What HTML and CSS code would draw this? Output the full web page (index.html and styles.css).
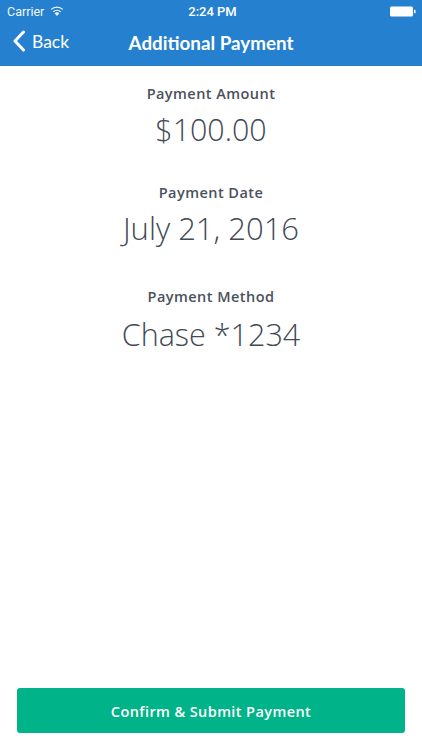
FILE: index.html
```html
<!DOCTYPE html>
<html lang="en">
<head>
<meta charset="utf-8">
<title>Additional Payment</title>
<link rel="stylesheet" href="styles.css">
</head>
<body>
<div class="screen">
  <header class="header">
    <div class="status">
      <div class="status-left">
        <span>Carrier</span>
        <svg class="wifi" width="14" height="10" viewBox="0 0 14 10"><path d="M7 10 L4.6 7.2 A3.6 3.6 0 0 1 9.4 7.2 Z" fill="#fff"/><path d="M3.4 5.8 A5.4 5.4 0 0 1 10.6 5.8" fill="none" stroke="#fff" stroke-width="1.3"/><path d="M1.2 3.4 A8.4 8.4 0 0 1 12.8 3.4" fill="none" stroke="#fff" stroke-width="1.3"/></svg>
      </div>
      <span class="time">2:24 PM</span>
      <div class="status-right">
        <svg width="26" height="11" viewBox="0 0 26 11"><rect x="0" y="0.5" width="23" height="10" rx="1.5" fill="#fff"/><rect x="24" y="3.8" width="1.5" height="3.4" fill="#fff"/></svg>
      </div>
    </div>
    <div class="nav">
      <div class="back">
        <svg width="14" height="22" viewBox="0 0 14 22"><path d="M11.5 2 L3 11 L11.5 20" fill="none" stroke="#fff" stroke-width="3" stroke-linecap="round" stroke-linejoin="round"/></svg>
        <span>Back</span>
      </div>
      <h1 class="title">Additional Payment</h1>
    </div>
  </header>
  <main class="details">
    <section class="item item-amount">
      <h2 class="label">Payment Amount</h2>
      <p class="value value-amount">$100.00</p>
    </section>
    <section class="item item-date">
      <h2 class="label">Payment Date</h2>
      <p class="value value-date">July 21, 2016</p>
    </section>
    <section class="item item-method">
      <h2 class="label">Payment Method</h2>
      <p class="value value-method">Chase *1234</p>
    </section>
  </main>
  <div class="footer">
    <button class="submit" type="button">Confirm &amp; Submit Payment</button>
  </div>
</div>
</body>
</html>
```
FILE: styles.css
```css
* { box-sizing: border-box; margin: 0; padding: 0; }
html, body { width: 422px; height: 750px; overflow: hidden; background: #fff; }
body { font-family: "Open Sans", "Liberation Sans", sans-serif; }
.screen { display: flex; flex-direction: column; height: 750px; }
.header { background: #2580d0; color: #fff; height: 66px; flex: none; }
.status { display: grid; grid-template-columns: 1fr auto 1fr; align-items: center; height: 22px; padding: 0 6px 0 7px; font-family: Roboto, "Liberation Sans", sans-serif; font-size: 12.5px; }
.status-left { display: flex; align-items: center; gap: 6px; opacity: .95; }
.time { font-weight: 500; font-size: 13px; padding-left: 2px; }
.status-right { display: flex; justify-content: flex-end; }
.nav { position: relative; display: flex; align-items: center; justify-content: center; height: 43px; padding-bottom: 2px; }
.back { position: absolute; left: 12px; top: 8px; display: flex; align-items: center; gap: 6px; font-family: Lato, "Open Sans", sans-serif; font-size: 17.5px; font-weight: 400; }
.title { font-family: Lato, "Open Sans", sans-serif; font-size: 18.8px; font-weight: 700; line-height: 24px; }
.details { flex: 1; text-align: center; color: #424a55; }
.label { font-size: 14.5px; font-weight: 600; line-height: 20px; letter-spacing: .45px; color: #4a515c; }
.value { font-weight: 300; line-height: 42px; padding-top: 5px; }
.value-amount { font-size: 30.4px; }
.value-date { font-size: 31px; padding-top: 4px; }
.value-method { font-size: 30.5px; padding-top: 6px; }
.item-amount { padding-top: 18px; }
.item-date { padding-top: 32px; }
.item-method { padding-top: 38px; }
.footer { padding: 0 17px 17px; flex: none; }
.submit { display: block; width: 100%; height: 45px; border: 0; border-radius: 3px; background: #00b388; color: #fff; font-family: "Open Sans", sans-serif; font-size: 14.5px; font-weight: 600; letter-spacing: .4px; padding-top: 1px; }
```
